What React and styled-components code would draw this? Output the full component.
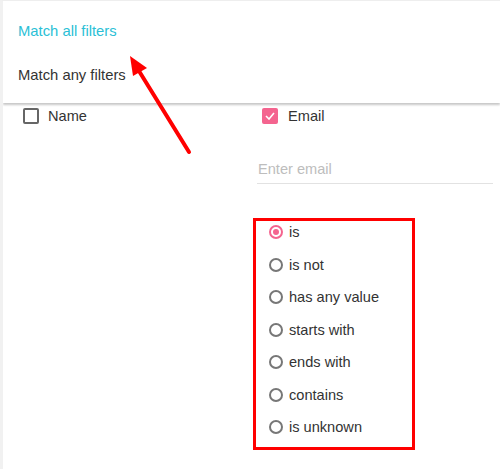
import React from 'react';
import styled, { createGlobalStyle } from 'styled-components';

const GlobalStyle = createGlobalStyle`
  html, body {
    margin: 0;
    background: #fff;
    font-family: "Liberation Sans", Arial, sans-serif;
  }
`;

const PINK = '#f4648f';

const Page = styled.div`
  position: relative;
  width: 500px;
  height: 469px;
  box-sizing: border-box;
  border-left: 3px solid #f1f1f1;
  border-top: 1px solid #eeeeee;
  overflow: hidden;
`;

const Menu = styled.ul`
  list-style: none;
  margin: 0;
  padding: 8px 0 6px;
  background: #fff;
  box-shadow: 0 2px 2px rgba(0, 0, 0, 0.22);
`;

const MenuItem = styled.li`
  height: 44px;
  display: flex;
  align-items: center;
  padding-left: 15px;
  font-size: 14.8px;
  color: ${(p) => (p.active ? '#2bbfd6' : '#333')};
`;

const Fields = styled.div`
  display: grid;
  grid-template-columns: 254px 236px;
  padding-top: 1px;
`;

const Column = styled.div`
  display: flex;
  flex-direction: column;
`;

const CheckRow = styled.label`
  display: flex;
  align-items: center;
  gap: ${(p) => (p.checked ? '10px' : '9px')};
  margin-left: ${(p) => (p.checked ? '5px' : '20px')};
  font-size: 14.6px;
  color: #333;
  height: 24px;
`;

const Box = styled.span`
  width: 16px;
  height: 16px;
  box-sizing: border-box;
  border-radius: 2px;
  border: ${(p) => (p.checked ? 'none' : '2px solid #666')};
  background: ${(p) => (p.checked ? PINK : '#fff')};
  display: flex;
  align-items: center;
  justify-content: center;
`;

const EmailInput = styled.input`
  margin-top: 29px;
  width: 236px;
  box-sizing: border-box;
  border: none;
  border-bottom: 1px solid #e2e2e2;
  padding: 4px 1px 6px;
  font: 14.6px "Liberation Sans", Arial, sans-serif;
  color: #333;
  outline: none;
  &::placeholder {
    color: #bdbdbd;
  }
`;

const OptionBox = styled.div`
  margin-top: 34px;
  margin-left: -4px;
  width: 162px;
  height: 232px;
  box-sizing: border-box;
  border: 3px solid #ff0000;
  padding: 0 0 0 13px;
  display: flex;
  flex-direction: column;
  gap: 10.5px;
`;

const Option = styled.label`
  height: 22px;
  display: flex;
  align-items: center;
  gap: 6px;
  font-size: 14.6px;
  color: #333;
`;

const Radio = styled.span`
  width: 14px;
  height: 14px;
  box-sizing: border-box;
  border-radius: 50%;
  border: 2px solid ${(p) => (p.checked ? PINK : '#777')};
  display: flex;
  align-items: center;
  justify-content: center;
  &::after {
    content: '';
    display: ${(p) => (p.checked ? 'block' : 'none')};
    width: 6px;
    height: 6px;
    border-radius: 50%;
    background: ${PINK};
  }
`;

const Arrow = styled.svg`
  position: absolute;
  left: -3px;
  top: -1px;
  pointer-events: none;
`;

const options = ['is', 'is not', 'has any value', 'starts with', 'ends with', 'contains', 'is unknown'];

export default function App() {
  return (
    <Page>
      <GlobalStyle />
      <Menu>
        <MenuItem active>Match all filters</MenuItem>
        <MenuItem>Match any filters</MenuItem>
      </Menu>
      <Fields>
        <Column>
          <CheckRow>
            <Box />
            Name
          </CheckRow>
        </Column>
        <Column>
          <CheckRow checked>
            <Box checked>
              <svg width="10" height="8" viewBox="0 0 10 8">
                <path d="M1 4 L4 7 L9 1" fill="none" stroke="#fff" strokeWidth="1.6" />
              </svg>
            </Box>
            Email
          </CheckRow>
          <EmailInput placeholder="Enter email" />
          <OptionBox>
            {options.map((o, i) => (
              <Option key={o}>
                <Radio checked={i === 0} />
                {o}
              </Option>
            ))}
          </OptionBox>
        </Column>
      </Fields>
      <Arrow width="500" height="469" viewBox="0 0 500 469">
        <line x1="189" y1="152" x2="139" y2="71" stroke="#f00" strokeWidth="4" strokeLinecap="round" />
        <polygon points="130,56 147,68 133,76" fill="#f00" />
      </Arrow>
    </Page>
  );
}
